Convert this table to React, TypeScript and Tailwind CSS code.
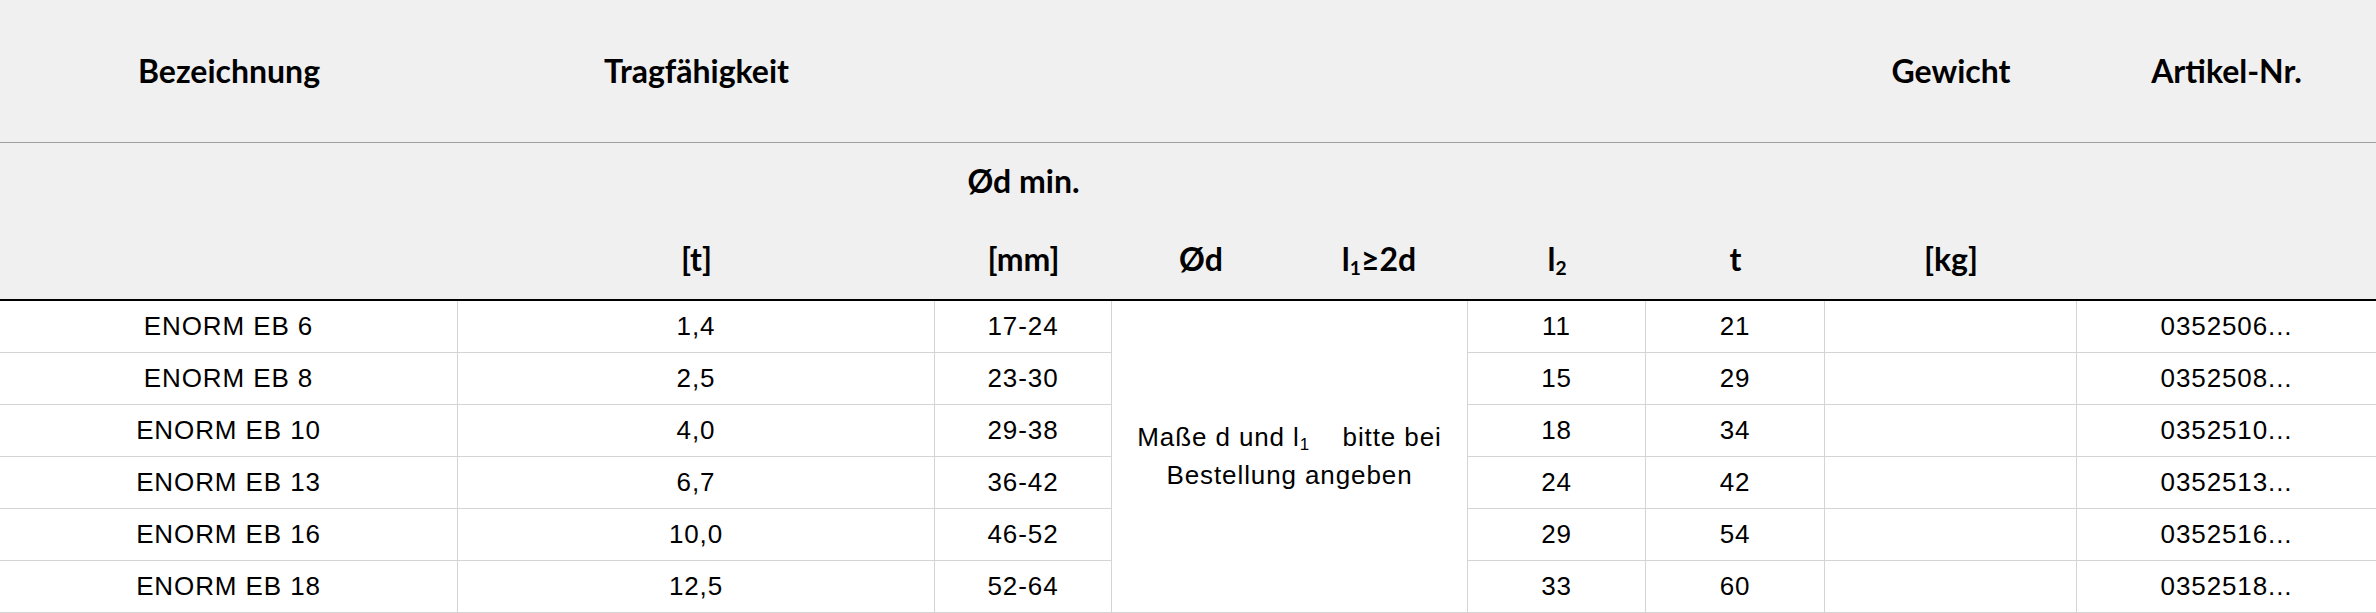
const cols =
  "grid grid-cols-[458px_477px_177px_178px_178px_178px_179px_252px_299px]"

type Row = {
  name: string
  load: string
  dmin: string
  l2: string
  t: string
  weight: string
  article: string
}

const rows: Row[] = [
  { name: "ENORM EB 6", load: "1,4", dmin: "17-24", l2: "11", t: "21", weight: "", article: "0352506..." },
  { name: "ENORM EB 8", load: "2,5", dmin: "23-30", l2: "15", t: "29", weight: "", article: "0352508..." },
  { name: "ENORM EB 10", load: "4,0", dmin: "29-38", l2: "18", t: "34", weight: "", article: "0352510..." },
  { name: "ENORM EB 13", load: "6,7", dmin: "36-42", l2: "24", t: "42", weight: "", article: "0352513..." },
  { name: "ENORM EB 16", load: "10,0", dmin: "46-52", l2: "29", t: "54", weight: "", article: "0352516..." },
  { name: "ENORM EB 18", load: "12,5", dmin: "52-64", l2: "33", t: "60", weight: "", article: "0352518..." },
]

function Cell({ children, last }: { children?: React.ReactNode; last?: boolean }) {
  return (
    <div
      className={
        "flex items-center justify-center border-b border-[#d4d4d4] " +
        (last ? "" : "border-r")
      }
    >
      {children}
    </div>
  )
}

export default function App() {
  return (
    <div className="w-[2376px] h-[613px] overflow-hidden bg-white text-black">
      {/* header block, no vertical rules */}
      <div className="bg-[#f0f0f0] font-['Lato',sans-serif] font-bold text-[32px] leading-none text-center">
        <div className={cols + " h-[143px] items-center border-b border-[#a0a0a0]"}>
          <div>Bezeichnung</div>
          <div>Tragfähigkeit</div>
          <div />
          <div />
          <div />
          <div />
          <div />
          <div>Gewicht</div>
          <div>Artikel-Nr.</div>
        </div>
        <div className={cols + " h-[75px] items-center"}>
          <div />
          <div />
          <div>Ød min.</div>
        </div>
        <div className={cols + " h-[81px] items-center"}>
          <div />
          <div>[t]</div>
          <div>[mm]</div>
          <div>Ød</div>
          <div>
            l<sub className="text-[0.6em]">1</sub>≥2d
          </div>
          <div>
            l<sub className="text-[0.6em]">2</sub>
          </div>
          <div>t</div>
          <div>[kg]</div>
          <div />
        </div>
      </div>

      {/* body */}
      <div
        className={
          cols +
          " grid-rows-[repeat(6,52px)] border-t-2 border-black font-['Liberation_Sans',Arial,sans-serif] text-[26px] tracking-[0.9px]"
        }
      >
        <div className="col-start-4 col-span-2 row-start-1 row-span-6 flex items-center justify-center border-b border-r border-[#d4d4d4] text-center leading-[38px]">
          <p className="pb-[2px]">
            Maße d und l<sub className="text-[0.65em]">1</sub>&nbsp;&nbsp;&nbsp; bitte bei
            <br />
            Bestellung angeben
          </p>
        </div>
        {rows.map((r) => (
          <React.Fragment key={r.name}>
            <Cell>{r.name}</Cell>
            <Cell>{r.load}</Cell>
            <Cell>{r.dmin}</Cell>
            <Cell>{r.l2}</Cell>
            <Cell>{r.t}</Cell>
            <Cell>{r.weight}</Cell>
            <Cell last>{r.article}</Cell>
          </React.Fragment>
        ))}
      </div>
    </div>
  )
}

import React from "react"
